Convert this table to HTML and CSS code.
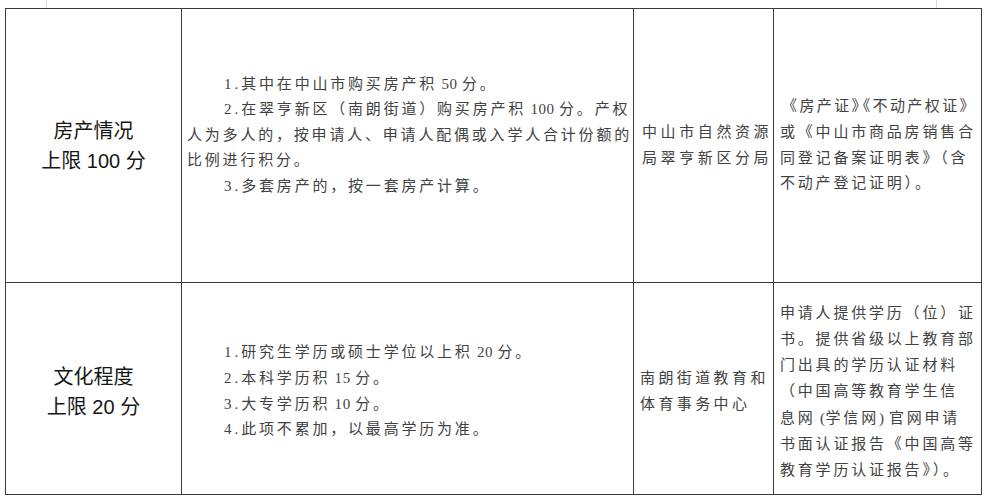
FILE: index.html
```html
<!DOCTYPE html>
<html lang="zh-CN">
<head>
<meta charset="utf-8">
<title>积分表</title>
<link rel="stylesheet" href="styles.css">
</head>
<body>
<div class="page">
  <div class="pagetop"></div>
  <table class="grid">
    <colgroup>
      <col class="c1"><col class="c2"><col class="c3"><col class="c4">
    </colgroup>
    <tr class="r1">
      <td class="head">房产情况<br>上限 100 分</td>
      <td class="rule rule-1">
        <p class="ind"><span class="lead">1.</span>其中在中山市购买房产积<span class="num"> 50 </span>分。</p>
        <p class="ind"><span class="lead">2.</span>在翠亨新区（南朗街道）购买房产积<span class="num"> 100 </span>分。产权<br>人为多人的，按申请人、申请人配偶或入学人合计份额的<br>比例进行积分。</p>
        <p class="ind"><span class="lead">3.</span>多套房产的，按一套房产计算。</p>
      </td>
      <td class="dept">中山市自然资源<br>局翠亨新区分局</td>
      <td class="docs"><span class="first">《房产证<span class="tight">》</span>《不动产权证》</span><br>或《中山市商品房销售合<br>同登记备案证明表》（含<br>不动产登记证明）。</td>
    </tr>
    <tr class="r2">
      <td class="head">文化程度<br>上限 20 分</td>
      <td class="rule rule-2">
        <p class="ind"><span class="lead">1.</span>研究生学历或硕士学位以上积<span class="num"> 20 </span>分。</p>
        <p class="ind"><span class="lead">2.</span>本科学历积<span class="num"> 15 </span>分。</p>
        <p class="ind"><span class="lead">3.</span>大专学历积<span class="num"> 10 </span>分。</p>
        <p class="ind"><span class="lead">4.</span>此项不累加，以最高学历为准。</p>
      </td>
      <td class="dept">南朗街道教育和<br>体育事务中心</td>
      <td class="docs docs-2">申请人提供学历（位）证<br>书。提供省级以上教育部<br>门出具的学历认证材料<br>（中国高等教育学生信<br>息网<span class="num"> (</span>学信网<span class="num">) </span>官网申请<br>书面认证报告《中国高等<br>教育学历认证报告》）。</td>
    </tr>
  </table>
</div>
</body>
</html>
```

FILE: styles.css
```css
html, body {
  margin: 0;
  padding: 0;
  background: #ffffff;
}

.page {
  width: 984px;
  height: 504px;
  padding-left: 5px;
  box-sizing: border-box;
}

.pagetop {
  height: 8px;
  margin-left: 41px;
  width: 891px;
  border-left: 1px solid #dcdcdc;
  border-right: 1px solid #dcdcdc;
  box-sizing: border-box;
}

.grid {
  border-collapse: collapse;
  table-layout: fixed;
  width: 976px;
}

.c1 { width: 176px; }
.c2 { width: 452px; }
.c3 { width: 140px; }
.c4 { width: 208px; }

.grid td {
  border: 1px solid #3a3a3a;
  vertical-align: middle;
  padding: 0;
  white-space: nowrap;
  overflow: hidden;
}

.r1 { height: 274px; }
.r2 { height: 212px; }

.grid .head {
  text-align: center;
  font-family: "Liberation Sans", "Noto Sans CJK SC", sans-serif;
  font-size: 20px;
  line-height: 30px;
  color: #161616;
}

.grid .r2 .head { padding-top: 6px; }

.grid .rule,
.grid .dept,
.grid .docs {
  font-family: "Liberation Serif", "Noto Sans CJK SC", serif;
  font-size: 15px;
  line-height: 25.6px;
  color: #424242;
  letter-spacing: 2.8px;
}

.num { letter-spacing: 0.6px; }
.lead { letter-spacing: 3px; }

.grid .rule { padding-left: 5px; }
.rule p { margin: 0; }
.rule .ind { text-indent: 37px; }
.grid .rule-1 { padding-bottom: 20px; }
.grid .rule-2 { padding-top: 6px; }

.grid .dept {
  padding-left: 8px;
  letter-spacing: 3.6px;
}

.grid .r2 .dept { padding-top: 6px; padding-left: 6px; letter-spacing: 3.4px; }

.grid .docs { padding-left: 6px; }
.docs .first { padding-left: 2px; letter-spacing: 2.4px; }
.docs .tight { letter-spacing: -4px; }
.grid .docs-2 { padding-top: 6px; line-height: 26.2px; }
```
